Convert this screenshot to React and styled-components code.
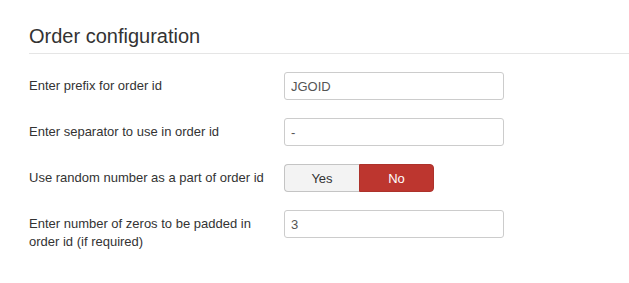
import React from "react";
import styled, { createGlobalStyle } from "styled-components";

const GlobalStyle = createGlobalStyle`
  body {
    margin: 0;
    background: #fff;
    font-family: "Liberation Sans", Arial, sans-serif;
    color: #333;
  }
`;

const fields = [
  { label: "Enter prefix for order id", type: "text", value: "JGOID" },
  { label: "Enter separator to use in order id", type: "text", value: "-" },
  { label: "Use random number as a part of order id", type: "toggle", value: "no" },
  { label: "Enter number of zeros to be padded in order id (if required)", type: "text", value: "3" },
];

export default function App() {
  return (
    <>
      <GlobalStyle />
      <Page>
        <Legend>Order configuration</Legend>
        <Form>
          {fields.map(field => (
            <Row key={field.label}>
              <Label>{field.label}</Label>
              <Controls>
                {field.type === "toggle" ? (
                  <Toggle>
                    <ToggleButton $active={field.value === "yes"}>Yes</ToggleButton>
                    <ToggleButton $active={field.value === "no"} $danger>
                      No
                    </ToggleButton>
                  </Toggle>
                ) : (
                  <Input defaultValue={field.value} />
                )}
              </Controls>
            </Row>
          ))}
        </Form>
      </Page>
    </>
  );
}

const Page = styled.div`
  padding: 24px 0 0 29px;
`;

const Legend = styled.h3`
  margin: 0;
  padding: 0 0 5px 0;
  font-size: 20px;
  line-height: 24px;
  font-weight: normal;
  color: #333;
  border-bottom: 1px solid #e5e5e5;
`;

const Form = styled.div`
  display: flex;
  flex-direction: column;
  gap: 18px;
  padding-top: 18px;
`;

const Row = styled.div`
  display: flex;
  align-items: flex-start;
`;

const Label = styled.label`
  width: 240px;
  margin-right: 15px;
  padding-top: 5px;
  font-size: 13px;
  line-height: 18px;
  color: #333;
`;

const Controls = styled.div`
  display: flex;
`;

const Input = styled.input`
  box-sizing: border-box;
  width: 220px;
  height: 28px;
  padding: 4px 6px;
  border: 1px solid #ccc;
  border-radius: 3px;
  font-family: "Liberation Sans", Arial, sans-serif;
  font-size: 13px;
  color: #555;
  background: #fff;
  outline: none;
`;

const Toggle = styled.div`
  display: flex;
`;

const ToggleButton = styled.button`
  box-sizing: border-box;
  width: 75px;
  height: 28px;
  padding: 0;
  font-family: "Liberation Sans", Arial, sans-serif;
  font-size: 13px;
  border: 1px solid ${p => (p.$active && p.$danger ? "#ad322b" : "#c4c4c4")};
  background: ${p => (p.$active && p.$danger ? "#bd362f" : "#f3f3f3")};
  color: ${p => (p.$active && p.$danger ? "#fff" : "#333")};
  &:first-child {
    border-radius: 4px 0 0 4px;
    border-right: none;
  }
  &:last-child {
    border-radius: 0 4px 4px 0;
  }
`;
